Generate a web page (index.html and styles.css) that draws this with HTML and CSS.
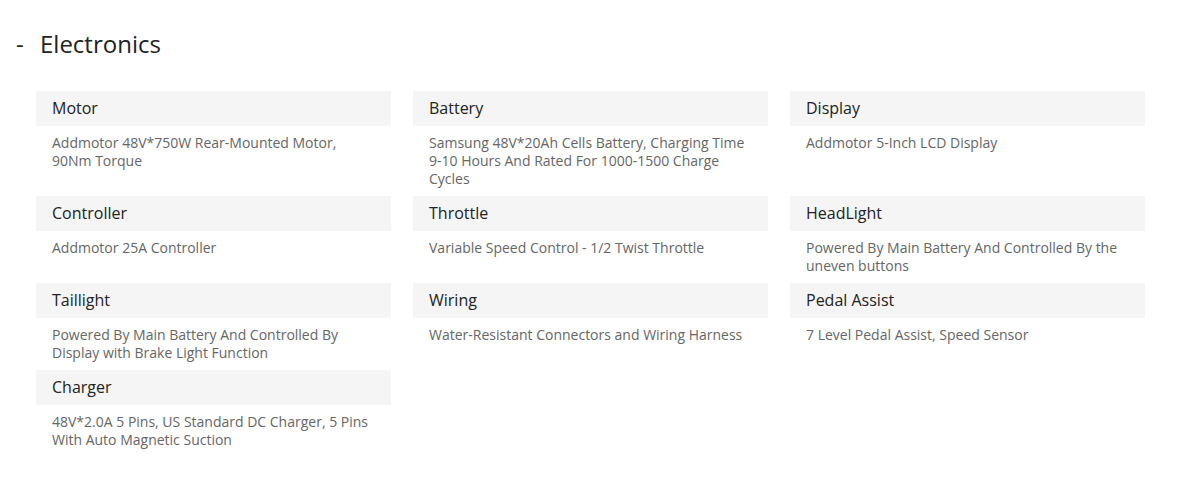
FILE: index.html
```html
<!DOCTYPE html>
<html lang="en">
<head>
<meta charset="utf-8">
<title>Electronics</title>
<link rel="stylesheet" href="styles.css">
</head>
<body>
<section class="spec">
  <h2 class="spec-title"><span class="dash">-</span>Electronics</h2>
  <div class="spec-grid">
    <div class="item"><div class="item-head">Motor</div><div class="item-body">Addmotor 48V*750W Rear-Mounted Motor, 90Nm Torque</div></div>
    <div class="item"><div class="item-head">Battery</div><div class="item-body">Samsung 48V*20Ah Cells Battery, Charging Time 9-10 Hours And Rated For 1000-1500 Charge Cycles</div></div>
    <div class="item"><div class="item-head">Display</div><div class="item-body">Addmotor 5-Inch LCD Display</div></div>
    <div class="item"><div class="item-head">Controller</div><div class="item-body">Addmotor 25A Controller</div></div>
    <div class="item"><div class="item-head">Throttle</div><div class="item-body">Variable Speed Control - 1/2 Twist Throttle</div></div>
    <div class="item"><div class="item-head">HeadLight</div><div class="item-body">Powered By Main Battery And Controlled By the uneven buttons</div></div>
    <div class="item"><div class="item-head">Taillight</div><div class="item-body">Powered By Main Battery And Controlled By Display with Brake Light Function</div></div>
    <div class="item"><div class="item-head">Wiring</div><div class="item-body">Water-Resistant Connectors and Wiring Harness</div></div>
    <div class="item"><div class="item-head">Pedal Assist</div><div class="item-body">7 Level Pedal Assist, Speed Sensor</div></div>
    <div class="item"><div class="item-head">Charger</div><div class="item-body">48V*2.0A 5 Pins, US Standard DC Charger, 5 Pins With Auto Magnetic Suction</div></div>
  </div>
</section>
</body>
</html>
```
FILE: styles.css
```css
* { box-sizing: border-box; }
html, body { margin: 0; padding: 0; background: #fff; }
body {
  font-family: "Open Sans", "Liberation Sans", sans-serif;
  color: #222;
}
.spec { padding: 27px 0 0 16px; }
.spec-title {
  margin: 0;
  font-size: 24px;
  font-weight: 400;
  line-height: 34px;
  color: #222;
}
.dash { display: inline-block; width: 24px; }
.spec-grid {
  margin: 30px 0 0 20px;
  width: 1109px;
  display: grid;
  grid-template-columns: repeat(3, 1fr);
  column-gap: 22px;
}
.item-head {
  background: #f5f5f5;
  height: 35px;
  line-height: 35px;
  padding: 0 16px;
  font-size: 16px;
  color: #222;
}
.item-body {
  padding: 8px 16px;
  font-size: 14px;
  line-height: 18px;
  color: #666;
}
```
